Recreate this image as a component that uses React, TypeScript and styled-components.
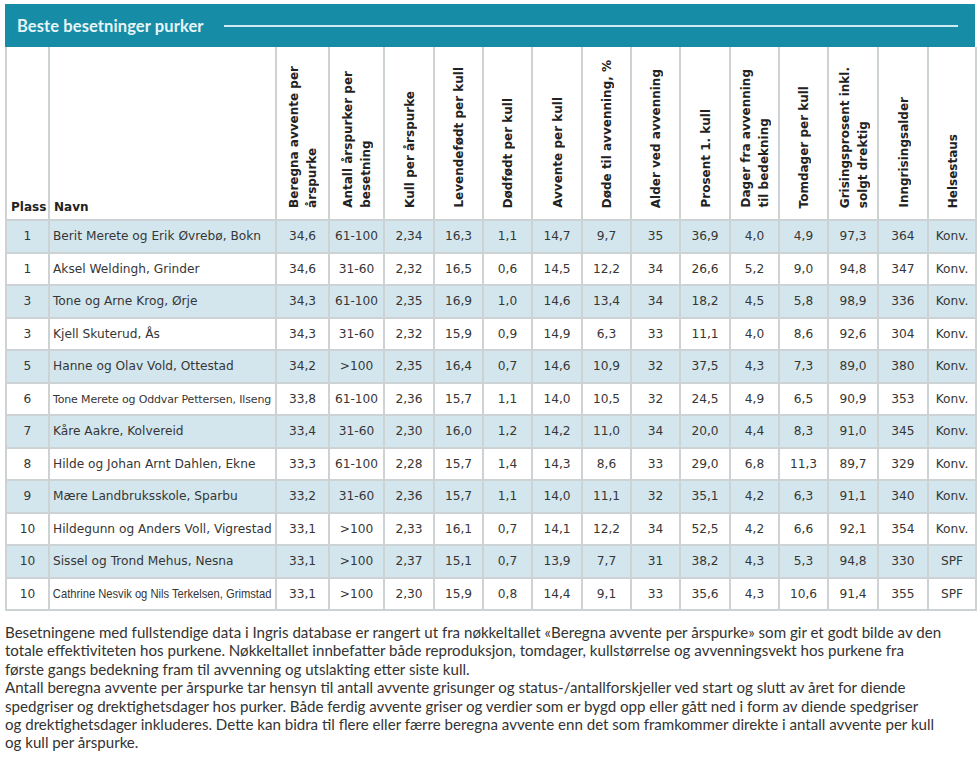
import React from "react";
import styled, { createGlobalStyle } from "styled-components";

const GlobalStyle = createGlobalStyle`
  html, body { margin: 0; padding: 0; background: #ffffff; }
  body { font-family: "DejaVu Sans", Verdana, sans-serif; }
`;

const Page = styled.div`
  width: 970px;
  padding: 4px 5px 0 5px;
  display: flex;
  flex-direction: column;
`;

const TitleBar = styled.div`
  height: 43px;
  background: #178ca6;
  display: flex;
  align-items: center;
  gap: 20px;
  padding: 0 17px 0 12px;
`;

const Title = styled.h1`
  margin: 0;
  font-family: "Lato", "Open Sans", sans-serif;
  font-weight: 700;
  font-size: 16.5px;
  letter-spacing: 0.1px;
  color: #e6f5f8;
  white-space: nowrap;
`;

const TitleRule = styled.div`
  flex: 1;
  height: 2px;
  background: #cfeaf1;
`;

const Table = styled.table`
  width: 970px;
  table-layout: fixed;
  border-collapse: collapse;
  color: #363636;
`;

const HeadRow = styled.tr`
  height: 173px;
`;

const HeadCell = styled.th<{ $align?: "left" | "center" }>`
  border: 2px solid #cdd2d5;
  border-top: none;
  vertical-align: bottom;
  text-align: ${(p) => p.$align ?? "center"};
  padding: 0 3px 3px 4px;
  font-size: 12px;
  font-weight: 700;
  color: #222;
  line-height: 17px;
`;

const Vertical = styled.div`
  display: inline-block;
  writing-mode: vertical-rl;
  transform: rotate(180deg);
  text-align: left;
  white-space: nowrap;
  line-height: 18px;
  padding-top: 3px;
`;

const BodyRow = styled.tr<{ $striped: boolean }>`
  height: 32.5px;
  background: ${(p) => (p.$striped ? "#d3e6ee" : "#ffffff")};
`;

const Cell = styled.td<{ $align?: "left" | "center" }>`
  border: 2px solid #cdd2d5;
  padding: 0 2px;
  text-align: ${(p) => p.$align ?? "center"};
  font-size: 12.2px;
  white-space: nowrap;
  overflow: hidden;
`;

const NameText = styled.span<{ $fit?: "small" | "narrow" }>`
  display: inline-block;
  padding-left: 1px;
  font-size: ${(p) => (p.$fit === "small" ? "11px" : p.$fit === "narrow" ? "13px" : "12.2px")};
  font-family: ${(p) =>
    p.$fit === "narrow"
      ? `"Liberation Sans", Arial, sans-serif`
      : `"DejaVu Sans", Verdana, sans-serif`};
  letter-spacing: ${(p) => (p.$fit === "small" ? "-0.15px" : "0")};
  transform: ${(p) => (p.$fit === "narrow" ? "scaleX(0.86)" : "none")};
  transform-origin: left center;
`;

const Note = styled.div`
  margin-top: 12px;
  font-family: "Lato", "Open Sans", sans-serif;
  font-size: 15.1px;
  line-height: 18.4px;
  color: #333;
`;

const Paragraph = styled.p`
  margin: 0;
`;

const Line = styled.span`
  display: block;
  white-space: nowrap;
`;

const widths = [43, 227, 53, 55, 50, 49, 49, 50, 49, 49, 50, 49, 49, 50, 50, 48];

const metricHeads: string[][] = [
  ["Beregna avvente per", "årspurke"],
  ["Antall årspurker per", "besetning"],
  ["Kull per årspurke"],
  ["Levendefødt per kull"],
  ["Dødfødt per kull"],
  ["Avvente per kull"],
  ["Døde til avvenning, %"],
  ["Alder ved avvenning"],
  ["Prosent 1. kull"],
  ["Dager fra avvenning", "til bedekning"],
  ["Tomdager per kull"],
  ["Grisingsprosent inkl.", "solgt drektig"],
  ["Inngrisingsalder"],
  ["Helsestaus"],
];

type Row = { plass: string; navn: string; fit?: "small" | "narrow"; v: string[] };

const rows: Row[] = [
  { plass: "1", navn: "Berit Merete og Erik Øvrebø, Bokn", v: ["34,6", "61-100", "2,34", "16,3", "1,1", "14,7", "9,7", "35", "36,9", "4,0", "4,9", "97,3", "364", "Konv."] },
  { plass: "1", navn: "Aksel Weldingh, Grinder", v: ["34,6", "31-60", "2,32", "16,5", "0,6", "14,5", "12,2", "34", "26,6", "5,2", "9,0", "94,8", "347", "Konv."] },
  { plass: "3", navn: "Tone og Arne Krog, Ørje", v: ["34,3", "61-100", "2,35", "16,9", "1,0", "14,6", "13,4", "34", "18,2", "4,5", "5,8", "98,9", "336", "Konv."] },
  { plass: "3", navn: "Kjell Skuterud, Ås", v: ["34,3", "31-60", "2,32", "15,9", "0,9", "14,9", "6,3", "33", "11,1", "4,0", "8,6", "92,6", "304", "Konv."] },
  { plass: "5", navn: "Hanne og Olav Vold, Ottestad", v: ["34,2", ">100", "2,35", "16,4", "0,7", "14,6", "10,9", "32", "37,5", "4,3", "7,3", "89,0", "380", "Konv."] },
  { plass: "6", navn: "Tone Merete og Oddvar Pettersen, Ilseng", fit: "small", v: ["33,8", "61-100", "2,36", "15,7", "1,1", "14,0", "10,5", "32", "24,5", "4,9", "6,5", "90,9", "353", "Konv."] },
  { plass: "7", navn: "Kåre Aakre, Kolvereid", v: ["33,4", "31-60", "2,30", "16,0", "1,2", "14,2", "11,0", "34", "20,0", "4,4", "8,3", "91,0", "345", "Konv."] },
  { plass: "8", navn: "Hilde og Johan Arnt Dahlen, Ekne", v: ["33,3", "61-100", "2,28", "15,7", "1,4", "14,3", "8,6", "33", "29,0", "6,8", "11,3", "89,7", "329", "Konv."] },
  { plass: "9", navn: "Mære Landbruksskole, Sparbu", v: ["33,2", "31-60", "2,36", "15,7", "1,1", "14,0", "11,1", "32", "35,1", "4,2", "6,3", "91,1", "340", "Konv."] },
  { plass: "10", navn: "Hildegunn og Anders Voll, Vigrestad", v: ["33,1", ">100", "2,33", "16,1", "0,7", "14,1", "12,2", "34", "52,5", "4,2", "6,6", "92,1", "354", "Konv."] },
  { plass: "10", navn: "Sissel og Trond Mehus, Nesna", v: ["33,1", ">100", "2,37", "15,1", "0,7", "13,9", "7,7", "31", "38,2", "4,3", "5,3", "94,8", "330", "SPF"] },
  { plass: "10", navn: "Cathrine Nesvik og Nils Terkelsen, Grimstad", fit: "narrow", v: ["33,1", ">100", "2,30", "15,9", "0,8", "14,4", "9,1", "33", "35,6", "4,3", "10,6", "91,4", "355", "SPF"] },
];

export default function App() {
  return (
    <>
      <GlobalStyle />
      <Page>
        <TitleBar>
          <Title>Beste besetninger purker</Title>
          <TitleRule />
        </TitleBar>
        <Table>
          <colgroup>
            {widths.map((w, i) => (
              <col key={i} style={{ width: w }} />
            ))}
          </colgroup>
          <thead>
            <HeadRow>
              <HeadCell>Plass</HeadCell>
              <HeadCell $align="left">Navn</HeadCell>
              {metricHeads.map((lines, i) => (
                <HeadCell key={i}>
                  <Vertical>
                    {lines.map((l, j) => (
                      <React.Fragment key={j}>
                        {j > 0 && <br />}
                        {l}
                      </React.Fragment>
                    ))}
                  </Vertical>
                </HeadCell>
              ))}
            </HeadRow>
          </thead>
          <tbody>
            {rows.map((r, i) => (
              <BodyRow key={i} $striped={i % 2 === 0}>
                <Cell>{r.plass}</Cell>
                <Cell $align="left">
                  <NameText $fit={r.fit}>{r.navn}</NameText>
                </Cell>
                {r.v.map((val, j) => (
                  <Cell key={j}>{val}</Cell>
                ))}
              </BodyRow>
            ))}
          </tbody>
        </Table>
        <Note>
          <Paragraph>
            <Line>Besetningene med fullstendige data i Ingris database er rangert ut fra nøkkeltallet «Beregna avvente per årspurke» som gir et godt bilde av den</Line>
            <Line>totale effektiviteten hos purkene. Nøkkeltallet innbefatter både reproduksjon, tomdager, kullstørrelse og avvenningsvekt hos purkene fra</Line>
            <Line>første gangs bedekning fram til avvenning og utslakting etter siste kull.</Line>
          </Paragraph>
          <Paragraph>
            <Line>Antall beregna avvente per årspurke tar hensyn til antall avvente grisunger og status-/antallforskjeller ved start og slutt av året for diende</Line>
            <Line>spedgriser og drektighetsdager hos purker. Både ferdig avvente griser og verdier som er bygd opp eller gått ned i form av diende spedgriser</Line>
            <Line>og drektighetsdager inkluderes. Dette kan bidra til flere eller færre beregna avvente enn det som framkommer direkte i antall avvente per kull</Line>
            <Line>og kull per årspurke.</Line>
          </Paragraph>
        </Note>
      </Page>
    </>
  );
}
